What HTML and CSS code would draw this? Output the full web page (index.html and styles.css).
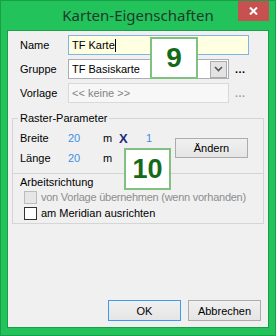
FILE: index.html
```html
<!DOCTYPE html>
<html lang="de">

<head>
    <meta charset="UTF-8">
    <meta name="viewport" content="width=device-width, initial-scale=1.0">
    <title>Karten-Eigenschaften</title>
    <link rel="stylesheet" href="styles.css">
</head>

<body>
    <div class="window">
        <div class="titlebar">
            <span></span>
            <span class="title">Karten-Eigenschaften</span>
            <button class="close" type="button">
                <svg width="9" height="8" viewBox="0 0 9 8">
                    <path d="M1 0.5 L8 7.5 M8 0.5 L1 7.5" stroke="#fff" stroke-width="2" fill="none" />
                </svg>
            </button>
        </div>

        <div class="client">
            <div class="row">
                <label>Name</label>
                <div class="field name-field">TF Karte<span class="caret"></span></div>
            </div>
            <div class="row">
                <label>Gruppe</label>
                <div class="field combo">
                    TF Basiskarte
                    <span class="drop">
                        <svg width="9" height="6" viewBox="0 0 9 6">
                            <path d="M1 1 L4.5 4.5 L8 1" stroke="#555" stroke-width="1.6" fill="none" />
                        </svg>
                    </span>
                </div>
                <span class="dots">...</span>
            </div>
            <div class="row">
                <label>Vorlage</label>
                <div class="field disabled">&lt;&lt; keine &gt;&gt;</div>
                <span class="dots off">...</span>
            </div>

            <fieldset class="group raster">
                <legend>Raster-Parameter</legend>
                <div class="raster-body">
                    <div class="raster-rows">
                        <div class="rrow">
                            <span class="rlabel">Breite</span>
                            <span class="val">20</span>
                            <span class="unit">m</span>
                            <span class="times">X</span>
                            <span class="val count">1</span>
                        </div>
                        <div class="rrow">
                            <span class="rlabel">Länge</span>
                            <span class="val">20</span>
                            <span class="unit">m</span>
                        </div>
                    </div>
                    <button class="btn change" type="button">Ändern</button>
                </div>
            </fieldset>

            <div class="group direction">
                <div class="group-title">Arbeitsrichtung</div>
                <div class="check-row disabled"><span class="box"></span>von Vorlage übernehmen (wenn vorhanden)</div>
                <div class="check-row"><span class="box"></span>am Meridian ausrichten</div>
            </div>

            <div class="actions">
                <button class="btn default" type="button">OK</button>
                <button class="btn" type="button">Abbrechen</button>
            </div>
        </div>

        <div class="marker marker-9">9</div>
        <div class="marker marker-10">10</div>
    </div>
</body>

</html>
```

FILE: styles.css
```css
body {
    margin: 0;
    font-family: "Liberation Sans", Arial, sans-serif;
    font-size: 11px;
    color: #000;
}

.window {
    width: 276px;
    height: 336px;
    box-sizing: border-box;
    border: 1px solid #1a9f49;
    background: #22c35a;
    display: flex;
    flex-direction: column;
    position: relative;
}

.titlebar {
    height: 29px;
    display: grid;
    grid-template-columns: 1fr auto 1fr;
    align-items: start;
    padding: 0 6px;
}

.title {
    font-family: "Noto Sans", "Open Sans", sans-serif;
    font-size: 15px;
    line-height: 29px;
    color: #1f3a2b;
}

.close {
    justify-self: end;
    width: 31px;
    height: 20px;
    border: 0;
    padding: 0;
    background: #c75050;
    display: flex;
    align-items: center;
    justify-content: center;
}

.client {
    flex: 1;
    margin: 0 6px 7px;
    border: 1px solid #1a9f49;
    background: #f0f0f0;
    display: flex;
    flex-direction: column;
    padding-top: 4px;
}

.row {
    display: flex;
    align-items: center;
    height: 20px;
    margin-bottom: 4px;
    padding-left: 12px;
}

.row label {
    width: 48px;
}

.field {
    box-sizing: border-box;
    width: 161px;
    height: 20px;
    border: 1px solid #abadb3;
    background: #fff;
    padding-left: 3px;
    display: flex;
    align-items: center;
    white-space: nowrap;
}

.name-field {
    width: 181px;
    border-color: #7eb4ea;
    background: #ffffe1;
}

.caret {
    display: inline-block;
    width: 1px;
    height: 13px;
    background: #000;
}

.drop {
    margin-left: auto;
    margin-right: 1px;
    box-sizing: border-box;
    width: 17px;
    height: 17px;
    border: 1px solid #acacac;
    background: #e3e3e3;
    display: flex;
    align-items: center;
    justify-content: center;
}

.field.disabled {
    border-color: #d9d9d9;
    background: #f7f7f7;
    color: #838383;
}

.dots {
    margin-left: 6px;
    font-weight: bold;
    letter-spacing: 0.5px;
}

.dots.off {
    color: #a0a0a0;
}

.group {
    margin: 0 4px;
    border: 1px solid #d5d5d5;
}

.raster {
    margin-top: 5px;
    padding: 3px 0 5px 7px;
}

.raster legend {
    padding: 0 2px;
    margin-left: -2px;
    line-height: 13px;
}

.raster-body {
    display: flex;
    align-items: center;
}

.rrow {
    display: flex;
    align-items: center;
    height: 20px;
}

.rlabel {
    width: 48px;
}

.val {
    width: 35px;
    color: #3d8fe6;
}

.val.count {
    width: auto;
}

.unit {
    width: 16px;
}

.times {
    width: 27px;
    font-size: 13px;
    font-weight: bold;
    color: #1a2a80;
}

.btn {
    box-sizing: border-box;
    flex-shrink: 0;
    width: 73px;
    height: 21px;
    padding: 0;
    border: 1px solid #acacac;
    background: linear-gradient(#f0f0f0, #e5e5e5);
    font-family: inherit;
    font-size: 11px;
    color: #000;
}

.change {
    height: 20px;
    margin-left: auto;
    margin-right: 15px;
}

.btn.default {
    border-color: #3c9bf0;
}

.direction {
    border-top: none;
    padding: 2px 0 2px 7px;
}

.group-title {
    line-height: 13px;
}

.check-row {
    display: flex;
    align-items: center;
    height: 16px;
    white-space: nowrap;
}

.box {
    box-sizing: border-box;
    width: 13px;
    height: 13px;
    margin: 0 4px 0 4px;
    border: 1px solid #333;
    background: #fff;
}

.check-row.disabled {
    color: #8d8d8d;
    letter-spacing: -0.25px;
}

.check-row.disabled .box {
    border-color: #bcbcbc;
    background: #e6e6e6;
}

.actions {
    margin-top: auto;
    display: flex;
    justify-content: flex-end;
    gap: 7px;
    padding: 0 7px 6px 0;
}

.marker {
    position: absolute;
    box-sizing: border-box;
    border: 2px solid #80c080;
    background: #fff;
    display: flex;
    align-items: center;
    justify-content: center;
    font-weight: bold;
    font-size: 28px;
    color: #156a1a;
}

.marker-9 {
    left: 149px;
    top: 36px;
    width: 48px;
    height: 42px;
}

.marker-10 {
    left: 123px;
    top: 147px;
    width: 47px;
    height: 42px;
    font-size: 27px;
}
```
